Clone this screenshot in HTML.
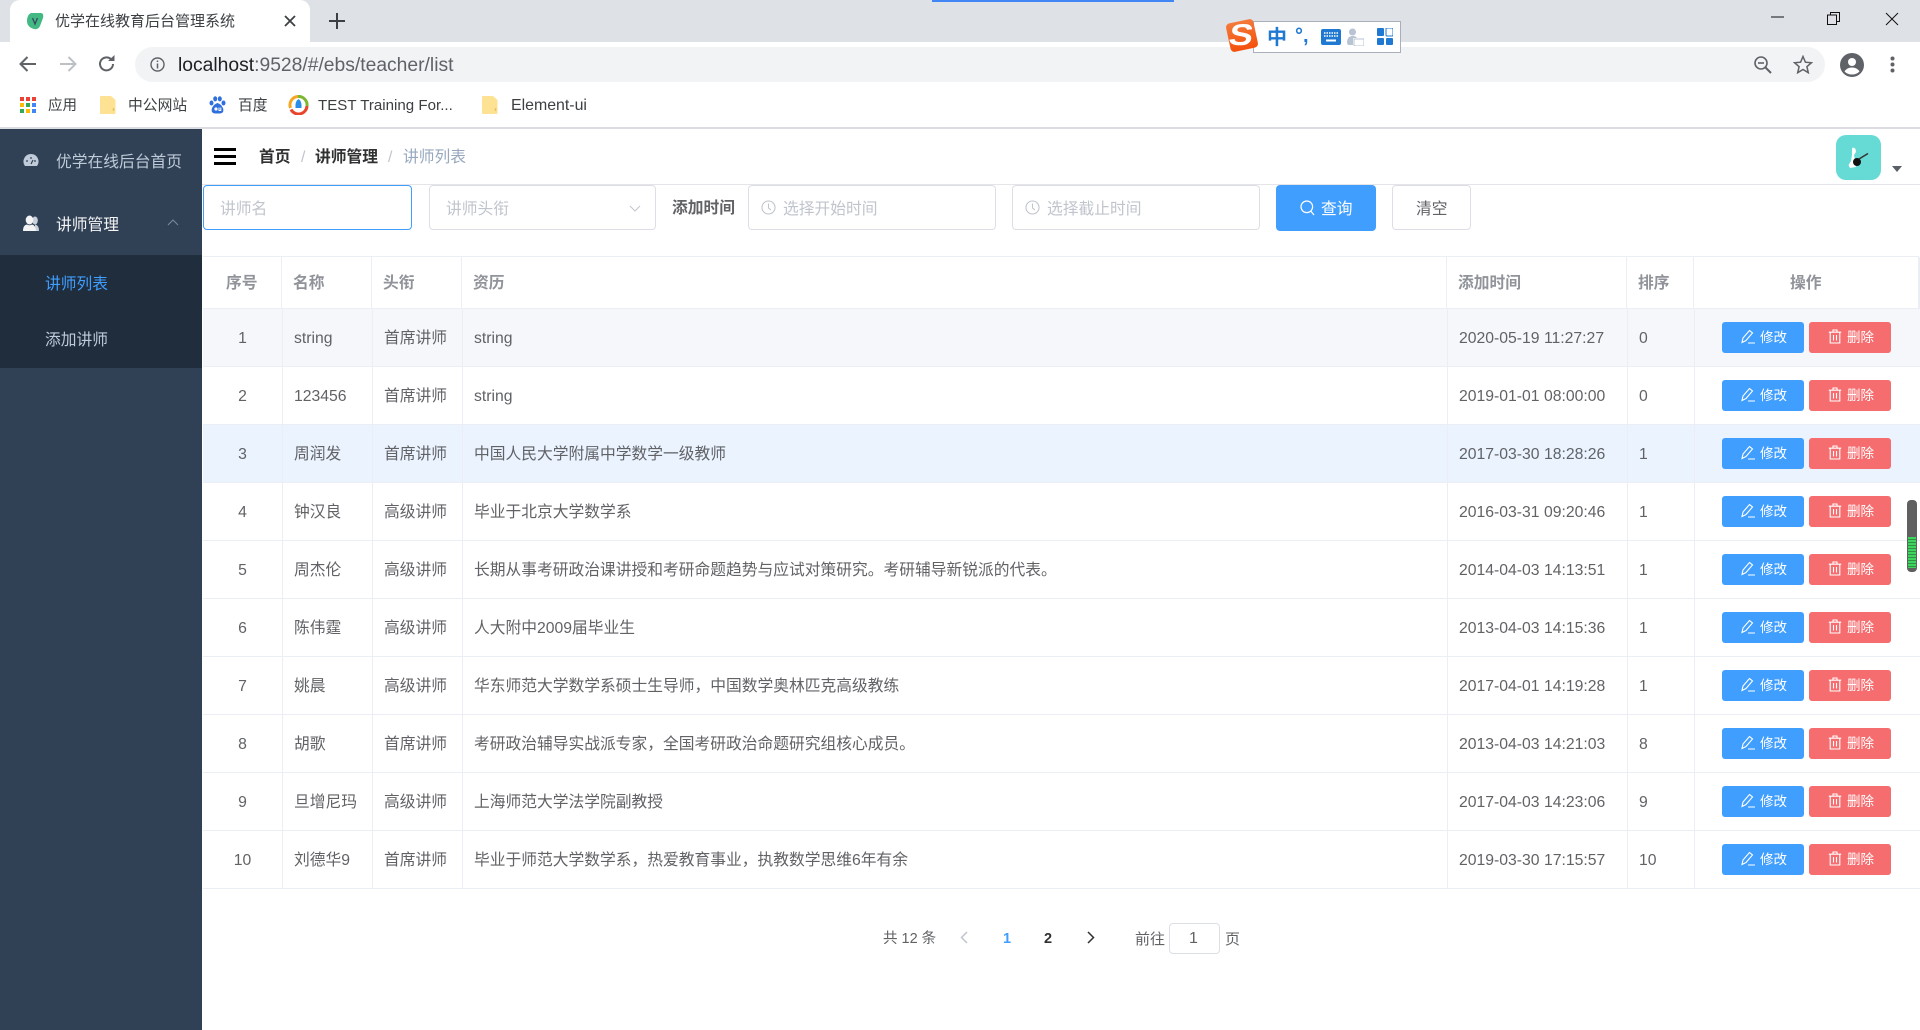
<!DOCTYPE html>
<html lang="zh-CN">
<head>
<meta charset="utf-8">
<title>优学在线教育后台管理系统</title>
<style>
html,body{margin:0;padding:0;width:1920px;height:1030px;overflow:hidden;background:#fff}
body{position:relative;font-family:"Liberation Sans","Noto Sans CJK SC",sans-serif;font-size:15.75px;color:#606266}
.a{position:absolute}
.t{position:absolute;white-space:nowrap;line-height:24px;height:24px}
.r{position:absolute;left:203px;width:1717px;height:58px;box-sizing:border-box;border-bottom:1px solid #ebeef5}
.r .t{top:18px}
.v{position:absolute;top:0;bottom:0;width:1px;background:#ebeef5}
.hv{position:absolute;top:257px;height:51px;width:1px;background:#ebeef5}
.h{top:272px;color:#909399;font-weight:bold}
.c0{left:0;width:79px;text-align:center}
.c1{left:91px}
.c2{left:181px}
.c3{left:271px}
.c4{left:1256px}
.c5{left:1436px}
.b{position:absolute;top:13px;width:82px;height:31px;border-radius:3px;color:#fff;font-size:13.5px;line-height:31px}
.b1{left:1519px;background:#409eff}
.b2{left:1606px;background:#f66d6f}
.b span{position:absolute;left:38px;top:0}
.b svg{position:absolute;left:19px;top:7px;width:14px;height:15px}
.i{position:absolute;box-sizing:border-box;border:1px solid #dcdfe6;border-radius:4px;height:45px;top:185px;background:#fff}
.ph{color:#c0c4cc;top:198px}
.ck{position:absolute;top:201px;width:15px;height:15px}
</style>
</head>
<body>
<svg width="0" height="0" style="position:absolute">
<symbol id="ed" viewBox="0 0 14 15"><path d="M1 13.5 2 9 8.5 1.5 11.5 4 5 11.5ZM7 14H14" fill="none" stroke="#fff" stroke-width="1.1"/></symbol>
<symbol id="de" viewBox="0 0 14 15"><path d="M.8 3.2H13.2M5 3V1H9V3M2.2 3.2V14H11.8V3.2M5.5 6V11.5M8.5 6V11.5" fill="none" stroke="#fff" stroke-width="1.1"/></symbol>
<symbol id="cl" viewBox="0 0 15 15"><circle cx="7.5" cy="7.5" r="6.5" fill="none" stroke="#c0c4cc" stroke-width="1.1"/><path d="M7.5 3.5V8L10 10" fill="none" stroke="#c0c4cc" stroke-width="1.1"/></symbol>
<symbol id="fo" viewBox="0 0 16 18"><path d="M1 0H11L15.500 4V17Q15.500 18 14.500 18H1Q0 18 0 17V1Q0 0 1 0Z" fill="#fde293"/><path d="M13.500 12V15" stroke="#e8c25f" stroke-width="1.500"/></symbol>
</svg>

<!-- browser chrome -->
<div class="a" style="left:0;top:0;width:1920px;height:42px;background:#dee1e6"></div>
<div class="a" style="left:932px;top:0;width:242px;height:2px;background:#4285f4"></div>
<div class="a" style="left:10px;top:0;width:300px;height:42px;background:#fff;border-radius:10px 10px 0 0"></div>
<svg class="a" style="left:26px;top:12px" width="18" height="18" viewBox="0 0 18 18"><path d="M5 1H15Q18 1 17 6L14 14Q12 18 8 17 1 15 1 9 1 3 5 1Z" fill="#42b983"/><path d="M6.500 6 9 12 11.500 6" fill="none" stroke="#35495e" stroke-width="1.300"/></svg>
<div class="t" style="left:55px;top:10px;font-size:15px;color:#3c4043">优学在线教育后台管理系统</div>
<svg class="a" style="left:284px;top:15px" width="12" height="12" viewBox="0 0 12 12"><path d="M1 1 11 11M11 1 1 11" stroke="#3c4043" stroke-width="1.800"/></svg>
<svg class="a" style="left:329px;top:13px" width="16" height="16" viewBox="0 0 16 16"><path d="M8 0V16M0 8H16" stroke="#3c4043" stroke-width="2"/></svg>
<svg class="a" style="left:1771px;top:16px" width="13" height="2"><path d="M0 1H13" stroke="#111" stroke-width="1"/></svg>
<svg class="a" style="left:1827px;top:12px" width="14" height="13" viewBox="0 0 14 13"><path d="M.5 3H9.500V12.500H.5ZM3.500 3V.5H12.500V9.500H9.500" fill="none" stroke="#111"/></svg>
<svg class="a" style="left:1885px;top:12px" width="14" height="14" viewBox="0 0 14 14"><path d="M1 1 13 13M13 1 1 13" stroke="#111" stroke-width="1"/></svg>

<div class="a" style="left:0;top:42px;width:1920px;height:85px;background:#fff"></div>
<svg class="a" style="left:18px;top:55px" width="20" height="18" viewBox="0 0 20 18"><path d="M18 9H3M9.500 2 2.500 9 9.500 16" fill="none" stroke="#5f6368" stroke-width="2"/></svg>
<svg class="a" style="left:58px;top:55px" width="20" height="18" viewBox="0 0 20 18"><path d="M2 9H17M10.500 2 17.500 9 10.500 16" fill="none" stroke="#bdc1c6" stroke-width="2"/></svg>
<svg class="a" style="left:98px;top:55px" width="18" height="18" viewBox="0 0 18 18"><path d="M15 9A6.500 6.500 0 1 1 13 4.200" fill="none" stroke="#5f6368" stroke-width="2"/><path d="M10 6H16.500V0Z" fill="#5f6368"/></svg>
<div class="a" style="left:135px;top:47px;width:1690px;height:35px;background:#f1f3f4;border-radius:18px"></div>
<svg class="a" style="left:150px;top:57px" width="15" height="15" viewBox="0 0 15 15"><circle cx="7.500" cy="7.500" r="6.500" fill="none" stroke="#5f6368" stroke-width="1.400"/><path d="M7.500 6.500V11.500M7.500 3.500V5" stroke="#5f6368" stroke-width="1.500"/></svg>
<div class="t" style="left:178px;top:54px;font-size:19.3px;color:#5f6368"><span style="color:#202124">localhost</span>:9528/#/ebs/teacher/list</div>
<svg class="a" style="left:1753px;top:55px" width="20" height="19" viewBox="0 0 20 19"><circle cx="8" cy="8" r="6" fill="none" stroke="#5f6368" stroke-width="1.600"/><path d="M5 8H11" stroke="#5f6368" stroke-width="1.600"/><path d="M12.500 12.500 18 18" stroke="#5f6368" stroke-width="2"/></svg>
<svg class="a" style="left:1793px;top:55px" width="20" height="19" viewBox="0 0 20 19"><path d="M10 1.500 12.400 7.200 18.500 7.700 13.900 11.700 15.300 17.700 10 14.500 4.700 17.700 6.100 11.700 1.500 7.700 7.600 7.200Z" fill="none" stroke="#5f6368" stroke-width="1.500"/></svg>
<svg class="a" style="left:1840px;top:53px" width="24" height="24" viewBox="0 0 24 24"><circle cx="12" cy="12" r="12" fill="#5f6368"/><circle cx="12" cy="9" r="4" fill="#fff"/><path d="M4.500 18.500Q7 14.500 12 14.500 17 14.500 19.500 18.500 16.500 21.500 12 21.500 7.500 21.500 4.500 18.500Z" fill="#fff"/></svg>
<svg class="a" style="left:1890px;top:56px" width="5" height="17" viewBox="0 0 5 17"><circle cx="2.500" cy="2.500" r="2" fill="#5f6368"/><circle cx="2.500" cy="8.500" r="2" fill="#5f6368"/><circle cx="2.500" cy="14.500" r="2" fill="#5f6368"/></svg>

<!-- bookmarks -->
<svg class="a" style="left:20px;top:97px" width="16" height="16" viewBox="0 0 16 16"><g><rect width="4" height="4" fill="#ea4335"/><rect x="6" width="4" height="4" fill="#ea4335"/><rect x="12" width="4" height="4" fill="#ea4335"/><rect y="6" width="4" height="4" fill="#fbbc05"/><rect x="6" y="6" width="4" height="4" fill="#34a853"/><rect x="12" y="6" width="4" height="4" fill="#4285f4"/><rect y="12" width="4" height="4" fill="#34a853"/><rect x="6" y="12" width="4" height="4" fill="#fbbc05"/><rect x="12" y="12" width="4" height="4" fill="#4285f4"/></g></svg>
<div class="t" style="left:48px;top:94px;font-size:14.500px;color:#3c4043">应用</div>
<svg class="a" style="left:100px;top:96px" width="16" height="18"><use href="#fo"/></svg>
<div class="t" style="left:128px;top:94px;font-size:14.800px;color:#3c4043">中公网站</div>
<svg class="a" style="left:209px;top:96px" width="17" height="18" viewBox="0 0 17 18"><g fill="#2f6fde"><ellipse cx="2.500" cy="7" rx="2" ry="2.500"/><ellipse cx="6.200" cy="2.800" rx="2" ry="2.600"/><ellipse cx="10.800" cy="2.800" rx="2" ry="2.600"/><ellipse cx="14.500" cy="7" rx="2" ry="2.500"/><path d="M8.500 7Q12 8 14 12 15.500 17 11 17.500H6Q1.500 17 3 12 5 8 8.500 7Z"/></g><circle cx="7" cy="13" r="1.600" fill="#fff"/><path d="M10 11.500V14.500H11.800V11.500" fill="none" stroke="#fff"/></svg>
<div class="t" style="left:238px;top:94px;font-size:14.800px;color:#3c4043">百度</div>
<svg class="a" style="left:288px;top:95px" width="21" height="20" viewBox="0 0 21 20"><circle cx="10.500" cy="10" r="8.500" fill="none" stroke="#fff" stroke-width="3"/><path d="M2.500 13A8.500 8.500 0 0 1 10 1.500" fill="none" stroke="#f5a623" stroke-width="3"/><path d="M10 1.500A8.500 8.500 0 0 1 19 11" fill="none" stroke="#7cb82f" stroke-width="3"/><path d="M19 11A8.500 8.500 0 0 1 3 14.500" fill="none" stroke="#e8452c" stroke-width="3"/><path d="M10.500 4Q14 6 13.500 13H7.500Q7 6 10.500 4Z" fill="#2a8ee8"/></svg>
<div class="t" style="left:318px;top:94px;font-size:15.100px;color:#3c4043">TEST Training For...</div>
<svg class="a" style="left:482px;top:96px" width="16" height="18"><use href="#fo"/></svg>
<div class="t" style="left:511px;top:94px;font-size:15.900px;color:#3c4043">Element-ui</div>
<div class="a" style="left:0;top:127px;width:1920px;height:2px;background:#dcdce3"></div>

<!-- sogou IME -->
<div class="a" style="left:1253px;top:21px;width:146px;height:30px;background:#fff;border:1px solid #a9afbb"></div>
<div class="a" style="left:1228px;top:21px;width:28px;height:29px;border-radius:4px;background:linear-gradient(#f47a3a,#f4500c);transform:rotate(-12deg)"></div>
<div class="t" style="left:1231px;top:20px;font-size:30px;line-height:32px;height:32px;color:#fff;font-weight:bold;transform:scaleX(1.200) skewX(-8deg)">S</div>
<div class="t" style="left:1267px;top:26px;font-size:20px;color:#1f78d1;font-weight:bold">中</div>
<div class="t" style="left:1295px;top:24px;font-size:20px;color:#1f78d1;font-weight:bold">°,</div>
<svg class="a" style="left:1321px;top:29px" width="20" height="16" viewBox="0 0 20 16"><rect width="20" height="16" rx="2" fill="#1f78d1"/><path d="M3 4H17M3 7H17" stroke="#fff" stroke-width="1.500" stroke-dasharray="1.500 1"/><path d="M5 11.500H15" stroke="#fff" stroke-width="2"/></svg>
<svg class="a" style="left:1346px;top:28px" width="18" height="18" viewBox="0 0 18 18"><circle cx="6.500" cy="4" r="3.500" fill="#b8c4d4"/><path d="M1 15Q1 8 6.500 8 10 8 11 10H7V17H2Z" fill="#b8c4d4"/><rect x="8" y="11" width="10" height="7" fill="#fff" stroke="#b8c4d4"/></svg>
<svg class="a" style="left:1377px;top:28px" width="16" height="17" viewBox="0 0 16 17"><rect width="7" height="8" rx="1" fill="#1f78d1"/><rect x="9" width="7" height="8" rx="1" fill="#fff" stroke="#1f78d1"/><rect y="10" width="7" height="7" rx="1" fill="#1f78d1"/><rect x="9" y="10" width="7" height="7" rx="1" fill="#1f78d1"/></svg>

<!-- sidebar -->
<div class="a" style="left:0;top:129px;width:202px;height:901px;background:#304156"></div>
<div class="a" style="left:0;top:255px;width:202px;height:113px;background:#1f2d3d"></div>
<svg class="a" style="left:23px;top:153px" width="16" height="15" viewBox="0 0 16 15"><path d="M8 1A7.500 7.500 0 0 0 2 13H14A7.500 7.500 0 0 0 8 1Z" fill="#bfcbd9"/><path d="M4 7V9M8 4V6M12 7V9M8 11 10 7" stroke="#304156" stroke-width="1.200"/></svg>
<div class="t" style="left:56px;top:151px;color:#bfcbd9">优学在线后台首页</div>
<svg class="a" style="left:23px;top:215px" width="16" height="17" viewBox="0 0 16 17"><ellipse cx="12" cy="5.500" rx="2.800" ry="4" fill="#c9d1da"/><path d="M12 9.500Q16 10 16 16H12Z" fill="#c9d1da"/><ellipse cx="6.500" cy="5" rx="3.800" ry="4.500" fill="#f4f4f5"/><path d="M0 16Q0 10 4 9.500 6.500 11 9 9.500 12.500 10 13 16Z" fill="#f4f4f5"/></svg>
<div class="t" style="left:56px;top:214px;color:#f4f4f5">讲师管理</div>
<svg class="a" style="left:167px;top:219px" width="12" height="7" viewBox="0 0 12 7"><path d="M1 6 6 1 11 6" fill="none" stroke="#7c8a9c"/></svg>
<div class="t" style="left:45px;top:273px;color:#409eff">讲师列表</div>
<div class="t" style="left:45px;top:329px;color:#bfcbd9">添加讲师</div>

<!-- navbar -->
<div class="a" style="left:214px;top:148px;width:22px;height:3px;background:#000"></div>
<div class="a" style="left:214px;top:155px;width:22px;height:3px;background:#000"></div>
<div class="a" style="left:214px;top:162px;width:22px;height:3px;background:#000"></div>
<div class="t" style="left:259px;top:146px;color:#303133;font-weight:bold">首页</div>
<div class="t" style="left:301px;top:146px;color:#c0c4cc">/</div>
<div class="t" style="left:315px;top:146px;color:#303133;font-weight:bold">讲师管理</div>
<div class="t" style="left:388px;top:146px;color:#c0c4cc">/</div>
<div class="t" style="left:403px;top:146px;color:#97a8be">讲师列表</div>
<div class="a" style="left:1836px;top:135px;width:45px;height:45px;border-radius:10px;background:#66dbd5"></div>
<svg class="a" style="left:1846px;top:145px" width="26" height="26" viewBox="0 0 26 26"><path d="M6 3Q8 2 9.500 4L10 7 8 10 9 15 10 22 4 23 2.500 20 5 16 6 10Z" fill="#fff"/><circle cx="11" cy="17" r="4" fill="#111"/><path d="M13 14 22 8.500" stroke="#333" stroke-width="1.500"/></svg>
<svg class="a" style="left:1892px;top:166px" width="10" height="6"><path d="M0 0H10L5 6Z" fill="#5a5e66"/></svg>
<div class="a" style="left:202px;top:184px;width:1718px;height:1px;background:#e4e4e9"></div>

<!-- search form -->
<div class="i" style="left:203px;width:209px;border-color:#409eff"></div>
<div class="t ph" style="left:220px">讲师名</div>
<div class="i" style="left:429px;width:227px"></div>
<div class="t ph" style="left:446px">讲师头衔</div>
<svg class="a" style="left:629px;top:205px" width="12" height="7" viewBox="0 0 12 7"><path d="M1 1 6 6 11 1" fill="none" stroke="#c0c4cc"/></svg>
<div class="t" style="left:672px;top:197px;font-weight:bold">添加时间</div>
<div class="i" style="left:748px;width:248px"></div>
<svg class="ck" style="left:761px;top:200px"><use href="#cl"/></svg>
<div class="t ph" style="left:783px">选择开始时间</div>
<div class="i" style="left:1012px;width:248px"></div>
<svg class="ck" style="left:1025px;top:200px"><use href="#cl"/></svg>
<div class="t ph" style="left:1047px">选择截止时间</div>
<div class="a" style="left:1276px;top:185px;width:100px;height:46px;background:#409eff;border-radius:4px"></div>
<svg class="a" style="left:1300px;top:200px" width="15" height="16" viewBox="0 0 15 16"><circle cx="6.800" cy="6.800" r="5.800" fill="none" stroke="#fff" stroke-width="1.200"/><path d="M10.800 11 14 15" stroke="#fff" stroke-width="1.200"/></svg>
<div class="t" style="left:1321px;top:198px;color:#fff">查询</div>
<div class="i" style="left:1392px;width:79px"></div>
<div class="t" style="left:1416px;top:198px">清空</div>

<!-- table -->
<div class="a" style="left:203px;top:256px;width:1716px;height:1px;background:#ebeef5"></div>
<div class="a" style="left:203px;top:308px;width:1717px;height:1px;background:#ebeef5"></div>
<div class="hv" style="left:281px"></div><div class="hv" style="left:371px"></div><div class="hv" style="left:461px"></div><div class="hv" style="left:1446px"></div><div class="hv" style="left:1626px"></div><div class="hv" style="left:1693px"></div><div class="hv" style="left:1918px;width:2px"></div>
<div class="t h" style="left:226px">序号</div>
<div class="t h" style="left:293px">名称</div>
<div class="t h" style="left:383px">头衔</div>
<div class="t h" style="left:473px">资历</div>
<div class="t h" style="left:1458px">添加时间</div>
<div class="t h" style="left:1638px">排序</div>
<div class="t h" style="left:1790px">操作</div>

<div class="r" style="top:309px;background:#f5f7fa"><i class="v" style="left:79px"></i><i class="v" style="left:169px"></i><i class="v" style="left:259px"></i><i class="v" style="left:1244px"></i><i class="v" style="left:1424px"></i><i class="v" style="left:1491px"></i><div class="t c0">1</div><div class="t c1">string</div><div class="t c2">首席讲师</div><div class="t c3">string</div><div class="t c4">2020-05-19 11:27:27</div><div class="t c5">0</div><div class="b b1"><svg><use href="#ed"/></svg><span>修改</span></div><div class="b b2"><svg><use href="#de"/></svg><span>删除</span></div></div>
<div class="r" style="top:367px"><i class="v" style="left:79px"></i><i class="v" style="left:169px"></i><i class="v" style="left:259px"></i><i class="v" style="left:1244px"></i><i class="v" style="left:1424px"></i><i class="v" style="left:1491px"></i><div class="t c0">2</div><div class="t c1">123456</div><div class="t c2">首席讲师</div><div class="t c3">string</div><div class="t c4">2019-01-01 08:00:00</div><div class="t c5">0</div><div class="b b1"><svg><use href="#ed"/></svg><span>修改</span></div><div class="b b2"><svg><use href="#de"/></svg><span>删除</span></div></div>
<div class="r" style="top:425px;background:#ebf3ff"><i class="v" style="left:79px"></i><i class="v" style="left:169px"></i><i class="v" style="left:259px"></i><i class="v" style="left:1244px"></i><i class="v" style="left:1424px"></i><i class="v" style="left:1491px"></i><div class="t c0">3</div><div class="t c1">周润发</div><div class="t c2">首席讲师</div><div class="t c3">中国人民大学附属中学数学一级教师</div><div class="t c4">2017-03-30 18:28:26</div><div class="t c5">1</div><div class="b b1"><svg><use href="#ed"/></svg><span>修改</span></div><div class="b b2"><svg><use href="#de"/></svg><span>删除</span></div></div>
<div class="r" style="top:483px"><i class="v" style="left:79px"></i><i class="v" style="left:169px"></i><i class="v" style="left:259px"></i><i class="v" style="left:1244px"></i><i class="v" style="left:1424px"></i><i class="v" style="left:1491px"></i><div class="t c0">4</div><div class="t c1">钟汉良</div><div class="t c2">高级讲师</div><div class="t c3">毕业于北京大学数学系</div><div class="t c4">2016-03-31 09:20:46</div><div class="t c5">1</div><div class="b b1"><svg><use href="#ed"/></svg><span>修改</span></div><div class="b b2"><svg><use href="#de"/></svg><span>删除</span></div></div>
<div class="r" style="top:541px"><i class="v" style="left:79px"></i><i class="v" style="left:169px"></i><i class="v" style="left:259px"></i><i class="v" style="left:1244px"></i><i class="v" style="left:1424px"></i><i class="v" style="left:1491px"></i><div class="t c0">5</div><div class="t c1">周杰伦</div><div class="t c2">高级讲师</div><div class="t c3">长期从事考研政治课讲授和考研命题趋势与应试对策研究。考研辅导新锐派的代表。</div><div class="t c4">2014-04-03 14:13:51</div><div class="t c5">1</div><div class="b b1"><svg><use href="#ed"/></svg><span>修改</span></div><div class="b b2"><svg><use href="#de"/></svg><span>删除</span></div></div>
<div class="r" style="top:599px"><i class="v" style="left:79px"></i><i class="v" style="left:169px"></i><i class="v" style="left:259px"></i><i class="v" style="left:1244px"></i><i class="v" style="left:1424px"></i><i class="v" style="left:1491px"></i><div class="t c0">6</div><div class="t c1">陈伟霆</div><div class="t c2">高级讲师</div><div class="t c3">人大附中2009届毕业生</div><div class="t c4">2013-04-03 14:15:36</div><div class="t c5">1</div><div class="b b1"><svg><use href="#ed"/></svg><span>修改</span></div><div class="b b2"><svg><use href="#de"/></svg><span>删除</span></div></div>
<div class="r" style="top:657px"><i class="v" style="left:79px"></i><i class="v" style="left:169px"></i><i class="v" style="left:259px"></i><i class="v" style="left:1244px"></i><i class="v" style="left:1424px"></i><i class="v" style="left:1491px"></i><div class="t c0">7</div><div class="t c1">姚晨</div><div class="t c2">高级讲师</div><div class="t c3">华东师范大学数学系硕士生导师，中国数学奥林匹克高级教练</div><div class="t c4">2017-04-01 14:19:28</div><div class="t c5">1</div><div class="b b1"><svg><use href="#ed"/></svg><span>修改</span></div><div class="b b2"><svg><use href="#de"/></svg><span>删除</span></div></div>
<div class="r" style="top:715px"><i class="v" style="left:79px"></i><i class="v" style="left:169px"></i><i class="v" style="left:259px"></i><i class="v" style="left:1244px"></i><i class="v" style="left:1424px"></i><i class="v" style="left:1491px"></i><div class="t c0">8</div><div class="t c1">胡歌</div><div class="t c2">首席讲师</div><div class="t c3">考研政治辅导实战派专家，全国考研政治命题研究组核心成员。</div><div class="t c4">2013-04-03 14:21:03</div><div class="t c5">8</div><div class="b b1"><svg><use href="#ed"/></svg><span>修改</span></div><div class="b b2"><svg><use href="#de"/></svg><span>删除</span></div></div>
<div class="r" style="top:773px"><i class="v" style="left:79px"></i><i class="v" style="left:169px"></i><i class="v" style="left:259px"></i><i class="v" style="left:1244px"></i><i class="v" style="left:1424px"></i><i class="v" style="left:1491px"></i><div class="t c0">9</div><div class="t c1">旦增尼玛</div><div class="t c2">高级讲师</div><div class="t c3">上海师范大学法学院副教授</div><div class="t c4">2017-04-03 14:23:06</div><div class="t c5">9</div><div class="b b1"><svg><use href="#ed"/></svg><span>修改</span></div><div class="b b2"><svg><use href="#de"/></svg><span>删除</span></div></div>
<div class="r" style="top:831px"><i class="v" style="left:79px"></i><i class="v" style="left:169px"></i><i class="v" style="left:259px"></i><i class="v" style="left:1244px"></i><i class="v" style="left:1424px"></i><i class="v" style="left:1491px"></i><div class="t c0">10</div><div class="t c1">刘德华9</div><div class="t c2">首席讲师</div><div class="t c3">毕业于师范大学数学系，热爱教育事业，执教数学思维6年有余</div><div class="t c4">2019-03-30 17:15:57</div><div class="t c5">10</div><div class="b b1"><svg><use href="#ed"/></svg><span>修改</span></div><div class="b b2"><svg><use href="#de"/></svg><span>删除</span></div></div>

<!-- scroll indicator -->
<div class="a" style="left:1907px;top:500px;width:10px;height:72px;border-radius:4px;background:#606060"></div>
<div class="a" style="left:1908px;top:537px;width:8px;height:31px;background:repeating-linear-gradient(#3fd35f 0 2px,#2e8f45 2px 3px)"></div>

<!-- pagination -->
<div class="t" style="left:883px;top:927px;font-size:14.500px">共 12 条</div>
<svg class="a" style="left:960px;top:931px" width="8" height="13" viewBox="0 0 8 13"><path d="M7 1 1.500 6.500 7 12" fill="none" stroke="#c0c4cc" stroke-width="1.500"/></svg>
<div class="t" style="left:1003px;top:927px;font-size:14.500px;font-weight:bold;color:#409eff">1</div>
<div class="t" style="left:1044px;top:927px;font-size:14.500px;font-weight:bold;color:#303133">2</div>
<svg class="a" style="left:1087px;top:931px" width="8" height="13" viewBox="0 0 8 13"><path d="M1 1 6.500 6.500 1 12" fill="none" stroke="#303133" stroke-width="1.500"/></svg>
<div class="t" style="left:1135px;top:928px;font-size:15px">前往</div>
<div class="a" style="left:1169px;top:923px;width:51px;height:31px;box-sizing:border-box;border:1px solid #dcdfe6;border-radius:4px"></div>
<div class="t" style="left:1189px;top:927px;font-size:16px">1</div>
<div class="t" style="left:1225px;top:928px;font-size:15px">页</div>
</body>
</html>
